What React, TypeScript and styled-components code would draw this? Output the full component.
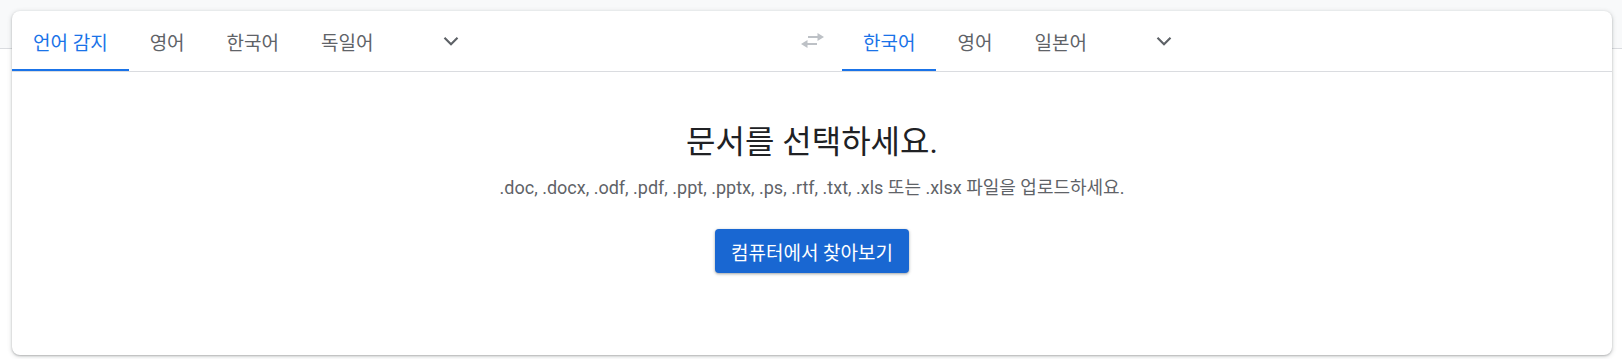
import styled, { createGlobalStyle } from 'styled-components';

const GlobalStyle = createGlobalStyle`
  html, body {
    margin: 0;
    padding: 0;
  }

  body {
    font-family: 'Roboto', 'Noto Sans CJK KR', sans-serif;
    color: #202124;
  }
`;

const sourceLangs = ['언어 감지', '영어', '한국어', '독일어'];
const targetLangs = ['한국어', '영어', '일본어'];

const ChevronIcon = () => (
  <svg width='26' height='26' viewBox='0 0 24 24' fill='none'>
    <path d='M6 9l6 6 6-6' stroke='#5f6368' strokeWidth='2' />
  </svg>
);

const SwapIcon = () => (
  <svg width='23' height='15' viewBox='0 0 23 15' fill='#bdc1c6'>
    <rect x='7' y='3' width='11' height='2' />
    <polygon points='16.5,0 23,4 16.5,8' />
    <rect x='5' y='10' width='11' height='2' />
    <polygon points='6.5,7 0,11 6.5,15' />
  </svg>
);

const LangPane = ({ langs, active }: { langs: string[]; active: number }) => (
  <Pane>
    <TabList>
      {langs.map((lang, i) => (
        <Tab key={lang + i} $active={i === active}>
          {lang}
        </Tab>
      ))}
    </TabList>
    <MoreButton>
      <ChevronIcon />
    </MoreButton>
  </Pane>
);

const App = () => {
  return (
    <Page>
      <GlobalStyle />
      <Card>
        <LangBar>
          <LangPane langs={sourceLangs} active={0} />
          <SwapButton>
            <SwapIcon />
          </SwapButton>
          <LangPane langs={targetLangs} active={0} />
        </LangBar>
        <UploadArea>
          <Title>문서를 선택하세요.</Title>
          <Hint>
            .doc, .docx, .odf, .pdf, .ppt, .pptx, .ps, .rtf, .txt, .xls 또는 .xlsx 파일을 업로드하세요.
          </Hint>
          <BrowseButton>컴퓨터에서 찾아보기</BrowseButton>
        </UploadArea>
      </Card>
    </Page>
  );
};

const Page = styled.div`
  width: 1622px;
  height: 359px;
  box-sizing: border-box;
  padding: 11px 10px 0 12px;
  background: linear-gradient(#f8f9fa 0 48px, #dadce0 48px 49px, #fff 49px);
  overflow: hidden;
`;

const Card = styled.section`
  width: 1600px;
  height: 344px;
  background: #fff;
  border-radius: 8px;
  box-shadow: 0 1px 2px rgba(60, 64, 67, 0.3), 0 1px 4px 1px rgba(60, 64, 67, 0.15);
  display: flex;
  flex-direction: column;
  overflow: hidden;
`;

const LangBar = styled.div`
  display: flex;
  height: 61px;
  border-bottom: 1px solid #dadce0;
  box-sizing: border-box;
`;

const Pane = styled.div`
  flex: 1;
  display: flex;
  align-items: center;
`;

const TabList = styled.div`
  display: flex;
  height: 100%;
`;

const Tab = styled.div<{ $active: boolean }>`
  display: flex;
  align-items: center;
  padding: 2px 21px 0;
  height: 60px;
  box-sizing: border-box;
  font-size: 19px;
  color: ${({ $active }) => ($active ? '#1a73e8' : '#5f6368')};
  border-bottom: 2px solid ${({ $active }) => ($active ? '#1a73e8' : 'transparent')};
  white-space: nowrap;
`;

const MoreButton = styled.div`
  width: 48px;
  height: 48px;
  margin-left: 32px;
  display: flex;
  align-items: center;
  justify-content: center;
`;

const SwapButton = styled.div`
  width: 60px;
  display: flex;
  align-items: center;
  justify-content: center;
  padding-bottom: 1px;
`;

const UploadArea = styled.div`
  flex: 1;
  display: flex;
  flex-direction: column;
  align-items: center;
  padding-top: 51px;
`;

const Title = styled.h2`
  margin: 0;
  font-size: 32px;
  line-height: 38px;
  font-weight: 400;
  color: #202124;
`;

const Hint = styled.p`
  margin: 14px 0 0;
  font-size: 18px;
  line-height: 26px;
  color: #5f6368;
`;

const BrowseButton = styled.button`
  margin-top: 28px;
  height: 44px;
  padding: 0 16px;
  border: none;
  border-radius: 4px;
  background: #1967d2;
  color: #fff;
  font-family: 'Roboto', 'Noto Sans CJK KR', sans-serif;
  font-size: 19px;
  box-shadow: 0 1px 2px rgba(60, 64, 67, 0.3), 0 1px 3px 1px rgba(60, 64, 67, 0.15);
  cursor: pointer;
`;

export default App;
